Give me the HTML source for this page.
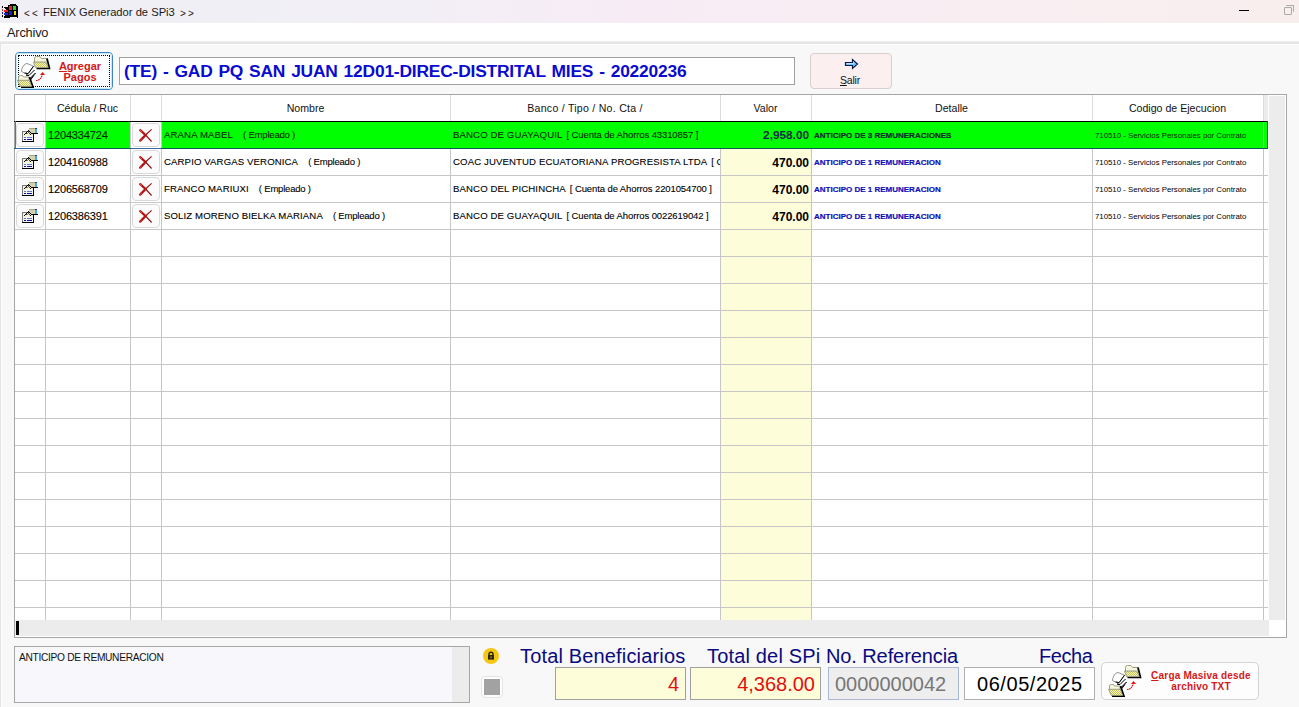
<!DOCTYPE html><html><head><meta charset="utf-8"><style>
*{margin:0;padding:0;box-sizing:border-box}
html,body{width:1299px;height:707px;overflow:hidden;background:#f8f8f8;font-family:"Liberation Sans",sans-serif;color:#000}
.a{position:absolute}
.t{position:absolute;white-space:nowrap;line-height:1}
.vl{position:absolute;width:1px;background:#c6c6c6}
.hl{position:absolute;height:1px;background:#c6c6c6}
.tx{-webkit-text-stroke:0.1px currentColor}
.btn{position:absolute;border:1px solid #d9d9d9;border-radius:4px;background:#fbfbfb}
</style></head><body>
<div class="a" style="left:0;top:0;width:1299px;height:23px;background:linear-gradient(90deg,#f0eff6 0%,#f2eff6 30%,#f7ecf5 48%,#f8edf3 62%,#f9eeee 100%)"></div>
<svg class="a" style="left:0px;top:0px" width="20" height="20" viewBox="0 0 20 20" shape-rendering="crispEdges">
<rect x="2" y="6" width="1" height="2" fill="#000"/><rect x="2" y="9" width="1" height="2" fill="#a04040"/><rect x="2" y="12" width="1" height="2" fill="#2020a0"/><rect x="2" y="15" width="1" height="2" fill="#000"/>
<rect x="4" y="7" width="5" height="1" fill="#000"/><rect x="4" y="10" width="5" height="2" fill="#e02020"/><rect x="4" y="13" width="5" height="2" fill="#2020d0"/><rect x="4" y="16" width="5" height="2" fill="#000"/>
<rect x="5" y="8" width="4" height="1" fill="#000"/><rect x="6" y="9" width="3" height="1" fill="#300"/><rect x="5" y="12" width="4" height="1" fill="#111"/><rect x="5" y="15" width="4" height="1" fill="#111"/>
<path d="M8 5H10V4H16V5H17V6H18V18H17V17H10V18H8Z" fill="#000"/>
<rect x="9" y="6" width="3" height="4" fill="#e02828"/><rect x="13" y="6" width="3" height="4" fill="#30d030"/>
<rect x="9" y="11" width="3" height="4" fill="#1818d8"/><rect x="14" y="11" width="2" height="4" fill="#f0e020"/>
</svg>
<div class="t" style="left:24px;top:9px;font-size:10px;color:#1a1a1a;letter-spacing:2.2px">&lt;&lt;</div><div class="t" style="left:43px;top:7px;font-size:11.2px;color:#1a1a1a">FENIX Generador de SPi3</div><div class="t" style="left:180px;top:9px;font-size:10px;color:#1a1a1a;letter-spacing:2.2px">&gt;&gt;</div>
<div class="a" style="left:1239px;top:10px;width:10px;height:1px;background:#000"></div>
<div class="a" style="left:1284px;top:7px;width:8px;height:8px;border:1px solid #aaa;border-radius:1px"></div>
<div class="a" style="left:1286px;top:5px;width:8px;height:7px;border-top:1px solid #aaa;border-right:1px solid #aaa;border-radius:1px"></div>
<div class="a" style="left:0;top:23px;width:1299px;height:18px;background:#fff"></div>
<div class="t" style="left:7px;top:27px;font-size:12.8px;letter-spacing:-0.2px;color:#1a1a1a">Archivo</div>
<div class="a" style="left:0;top:41px;width:1299px;height:3px;background:linear-gradient(#efefef,#e2e2e2)"></div>
<div class="a" style="left:0;top:44px;width:1299px;height:1px;background:#fff"></div>
<div class="a" style="left:0;top:44px;width:1px;height:663px;background:#e4e4e4"></div>
<div class="a" style="left:1px;top:44px;width:1px;height:663px;background:#fdfdfd"></div>
<div class="a" style="left:15px;top:52px;width:98px;height:38px;border:1px solid #3d84c4;border-radius:4px;background:#fbfdfe"></div>
<div class="a" style="left:16px;top:53px;width:96px;height:36px;border:1px solid #c5e9f7;border-radius:3px"></div>
<div class="a" style="left:18px;top:55px;width:92px;height:32px;border:1px dotted #000"></div>
<svg class="a" style="left:13px;top:53px" width="40" height="38" viewBox="0 0 40 38">
<defs><pattern id="dz13" width="2" height="2" patternUnits="userSpaceOnUse"><rect width="2" height="2" fill="#f4f4b8"/><rect width="1" height="1" fill="#c4c45a"/><rect x="1" y="1" width="1" height="1" fill="#c4c45a"/></pattern></defs>
<path d="M21.5 9V5.5Q21.5 3.5 23.5 3.5H27L28.5 5.5H34V9" fill="#f6f6dc" stroke="#a0a088" stroke-width="1"/>
<path d="M34 5.5L36.5 15.5H23.5" fill="none" stroke="#000" stroke-width="1.7"/>
<path d="M20.5 9H32.8L35.3 14.6H22.4Z" fill="url(#dz13)" stroke="#8a8a78" stroke-width="0.8"/>
<path d="M8.5 18.5C9 14 11 11 14 10.5L20.5 13.2L15.2 20.6L11.5 20Z" fill="#fff" stroke="#777" stroke-width="0.8"/>
<path d="M20.5 13.2L15.2 20.6L11.5 20" fill="none" stroke="#000" stroke-width="1"/>
<path d="M13 22L16 22.5L21.5 17M14.5 25L17 25.5L22.5 20M17 27.5L21 22.5" fill="none" stroke="#000" stroke-width="1"/>
<path d="M15.5 21L21.2 16.4L22.6 19.6L17 25.4Z" fill="#fff"/>
<path d="M13 22L16 22.5L21.5 17M14.5 25L17 25.5L22.5 20" fill="none" stroke="#000" stroke-width="1"/>
<path d="M5.5 27V24Q5.5 22.5 7.5 22.5H9.5L10.5 24H16V27" fill="#f6f6dc" stroke="#a0a088" stroke-width="1"/>
<path d="M16.5 24L20 34.2H8" fill="none" stroke="#000" stroke-width="1.7"/>
<path d="M4.5 27.3H16.2L18.6 33.4H7.3Z" fill="url(#dz13)" stroke="#8a8a78" stroke-width="0.8"/>
<path d="M23 27.5Q27.5 27.5 29.5 21.5" fill="none" stroke="#e01010" stroke-width="1.2" stroke-dasharray="1.6 0.6"/>
<path d="M27 22L29.5 19L32 22Z" fill="#e01010"/>
</svg>
<div class="t" style="left:57px;top:61px;width:46px;text-align:center;font-size:11px;font-weight:bold;color:#d41919;line-height:11px"><u>A</u>gregar<br>Pagos</div>
<div class="a" style="left:119px;top:57px;width:676px;height:28px;border:1px solid #a0a0a0;background:#fff"></div>
<div class="t" style="left:124px;top:63px;font-size:17.4px;font-weight:bold;word-spacing:1.3px;letter-spacing:-0.2px;color:#0a0ad0">(TE) - GAD PQ SAN JUAN 12D01-DIREC-DISTRITAL MIES - 20220236</div>
<div class="a" style="left:810px;top:53px;width:82px;height:36px;border:1px solid #d8d0d0;border-radius:4px;background:#fcefef"></div>
<svg class="a" style="left:843px;top:57px" width="16" height="14" viewBox="0 0 16 14">
<path d="M2.5 5.5H9.5V2.5L14.5 7L9.5 11.5V8.5H2.5Z" fill="#70c4f4" stroke="#0a1a50" stroke-width="1.2" stroke-linejoin="miter"/><path d="M3.5 6.5H10.5V4.5" fill="none" stroke="#c8ecff" stroke-width="0.8"/></svg>
<div class="t" style="left:840px;top:75px;font-size:10.5px;letter-spacing:-0.2px;color:#111"><u>S</u>alir</div>
<div class="a" style="left:14px;top:94px;width:1273px;height:544px;border:1px solid #a6a6a6;background:#fff"></div>
<div class="a" style="left:721px;top:148px;width:90px;height:472px;background:#fdfdd9"></div>
<div class="a" style="left:15px;top:95px;width:1248px;height:26px;background:#fff"></div>
<div class="a" style="left:1264px;top:95px;width:4px;height:26px;background:#ebebeb"></div>
<div class="a" style="left:1269px;top:96px;width:16px;height:524px;background:#ececec"></div>
<div class="a" style="left:15px;top:620px;width:1254px;height:16px;background:#ececec"></div>
<div class="a" style="left:16px;top:621px;width:3px;height:14px;background:#000"></div>
<div class="hl" style="left:15px;top:148px;width:1253px"></div>
<div class="hl" style="left:15px;top:175px;width:1253px"></div>
<div class="hl" style="left:15px;top:202px;width:1253px"></div>
<div class="hl" style="left:15px;top:229px;width:1253px"></div>
<div class="hl" style="left:15px;top:256px;width:1253px"></div>
<div class="hl" style="left:15px;top:283px;width:1253px"></div>
<div class="hl" style="left:15px;top:310px;width:1253px"></div>
<div class="hl" style="left:15px;top:337px;width:1253px"></div>
<div class="hl" style="left:15px;top:364px;width:1253px"></div>
<div class="hl" style="left:15px;top:391px;width:1253px"></div>
<div class="hl" style="left:15px;top:418px;width:1253px"></div>
<div class="hl" style="left:15px;top:445px;width:1253px"></div>
<div class="hl" style="left:15px;top:472px;width:1253px"></div>
<div class="hl" style="left:15px;top:499px;width:1253px"></div>
<div class="hl" style="left:15px;top:526px;width:1253px"></div>
<div class="hl" style="left:15px;top:553px;width:1253px"></div>
<div class="hl" style="left:15px;top:580px;width:1253px"></div>
<div class="hl" style="left:15px;top:607px;width:1253px"></div>
<div class="vl" style="left:45px;top:121px;height:499px"></div>
<div class="vl" style="left:45px;top:95px;height:26px;background:#dcdcdc"></div>
<div class="vl" style="left:130px;top:121px;height:499px"></div>
<div class="vl" style="left:130px;top:95px;height:26px;background:#dcdcdc"></div>
<div class="vl" style="left:161px;top:121px;height:499px"></div>
<div class="vl" style="left:161px;top:95px;height:26px;background:#dcdcdc"></div>
<div class="vl" style="left:450px;top:121px;height:499px"></div>
<div class="vl" style="left:450px;top:95px;height:26px;background:#dcdcdc"></div>
<div class="vl" style="left:720px;top:121px;height:499px"></div>
<div class="vl" style="left:720px;top:95px;height:26px;background:#dcdcdc"></div>
<div class="vl" style="left:811px;top:121px;height:499px"></div>
<div class="vl" style="left:811px;top:95px;height:26px;background:#dcdcdc"></div>
<div class="vl" style="left:1092px;top:121px;height:499px"></div>
<div class="vl" style="left:1092px;top:95px;height:26px;background:#dcdcdc"></div>
<div class="vl" style="left:1263px;top:121px;height:499px"></div>
<div class="vl" style="left:1263px;top:95px;height:26px;background:#dcdcdc"></div>
<div class="t" style="left:45px;top:103px;width:85px;text-align:center;font-size:10.6px;color:#111">Cédula / Ruc</div>
<div class="t" style="left:161px;top:103px;width:289px;text-align:center;font-size:10.6px;color:#111">Nombre</div>
<div class="t" style="left:450px;top:103px;width:270px;text-align:center;font-size:10.6px;letter-spacing:0.25px;color:#111">Banco / Tipo / No. Cta /</div>
<div class="t" style="left:720px;top:103px;width:91px;text-align:center;font-size:10.6px;color:#111">Valor</div>
<div class="t" style="left:811px;top:103px;width:281px;text-align:center;font-size:10.6px;color:#111">Detalle</div>
<div class="t" style="left:1092px;top:103px;width:171px;text-align:center;font-size:10.6px;color:#111">Codigo de Ejecucion</div>
<div class="a" style="left:46px;top:122px;width:84px;height:26px;background:#00ff00"></div>
<div class="a" style="left:162px;top:122px;width:1106px;height:26px;background:#00ff00"></div>
<div class="a" style="left:14px;top:121px;width:1254px;height:1px;background:#000"></div>
<div class="a" style="left:14px;top:148px;width:1254px;height:1px;background:#0d5a5a"></div>
<div class="a" style="left:15px;top:121px;width:1px;height:28px;background:#3d7ac0"></div>
<div class="a" style="left:15px;top:148px;width:30px;height:1px;background:#3a6aa8"></div>
<div class="a" style="left:131px;top:148px;width:30px;height:1px;background:#3a6aa8"></div>
<div class="a" style="left:1267px;top:121px;width:1px;height:28px;background:#0d5a5a"></div>
<div class="a" style="left:1263px;top:122px;width:1px;height:26px;background:#8cff8c"></div>
<div class="btn" style="left:16px;top:123px;width:28px;height:24px"></div>
<svg class="a" style="left:20px;top:125px" width="20" height="20" viewBox="0 0 20 20" shape-rendering="crispEdges">
<rect x="2" y="6" width="12" height="5" fill="#f6f4d0"/><rect x="2" y="11" width="12" height="6" fill="#f2f2fc"/>
<rect x="2" y="6" width="1" height="11" fill="#7a7a7a"/><rect x="2" y="6" width="12" height="1" fill="#7a7a7a"/>
<rect x="13" y="6" width="1" height="11" fill="#000"/><rect x="2" y="16" width="12" height="1" fill="#000"/>
<rect x="4" y="12" width="2" height="1" fill="#6878b0"/><rect x="7" y="12" width="5" height="1" fill="#6878b0"/>
<rect x="4" y="14" width="2" height="1" fill="#12128c"/><rect x="7" y="14" width="5" height="1" fill="#12128c"/>
<rect x="9" y="3" width="6" height="5" fill="#d6d2a6"/><rect x="9" y="3" width="6" height="1" fill="#a8a68a"/>
<rect x="11" y="8" width="7" height="1" fill="#000"/><rect x="15" y="3" width="2" height="5" fill="#48a8f0"/><rect x="15" y="3" width="2" height="1" fill="#1a4a9a"/>
<rect x="4" y="9" width="1" height="1" fill="#000"/><rect x="5" y="8" width="1" height="1" fill="#000"/><rect x="6" y="7" width="1" height="1" fill="#000"/>
<rect x="7" y="6" width="1" height="1" fill="#000"/><rect x="8" y="5" width="1" height="1" fill="#000"/><rect x="9" y="6" width="1" height="1" fill="#000"/>
<rect x="10" y="7" width="1" height="1" fill="#000"/><rect x="11" y="8" width="1" height="1" fill="#000"/><rect x="10" y="9" width="1" height="1" fill="#000"/>
<rect x="6" y="8" width="1" height="1" fill="#444"/><rect x="8" y="6" width="1" height="1" fill="#444"/><rect x="9" y="8" width="1" height="1" fill="#444"/><rect x="7" y="8" width="1" height="1" fill="#888"/><rect x="8" y="7" width="1" height="1" fill="#555"/>
</svg>
<div class="btn" style="left:132px;top:123px;width:28px;height:24px"></div>
<svg class="a" style="left:136px;top:127px" width="18" height="18" viewBox="0 0 18 18"><path d="M9.5 8L15.6 2.3M9.5 8L15.6 14.5" fill="none" stroke="#9a0c0c" stroke-width="1.1"/><path d="M4.2 3.2L9.5 8L4.2 13.6" fill="none" stroke="#b41414" stroke-width="2.3" stroke-linecap="round"/><path d="M4.2 3.2L6 4.8M4.2 13.6L5.5 12.3" stroke="#f07070" stroke-width="0.8"/></svg>
<div class="t" style="left:48px;top:130px;font-size:11px;letter-spacing:-0.15px;-webkit-text-stroke:0.12px #0a2a0a;color:#0a2a0a">1204334724</div>
<div class="t tx" style="left:164px;top:130px;font-size:9.6px;color:#0a2a0a"><span style="letter-spacing:0.12px">ARANA MABEL</span><span style="margin-left:10px;font-size:9.5px;letter-spacing:-0.2px">( Empleado )</span></div>
<div class="a" style="left:451px;top:122px;width:269px;height:26px;overflow:hidden"><div class="t tx" style="left:2px;top:8px;font-size:9.6px;color:#0a2a0a"><span style="letter-spacing:0.12px">BANCO DE GUAYAQUIL</span><span style="margin-left:4px;font-size:9.5px;letter-spacing:-0.1px">[ Cuenta de Ahorros 43310857 ]</span></div></div>
<div class="t" style="left:721px;top:130px;width:88px;text-align:right;font-size:11.8px;font-weight:bold;color:#102a48">2,958.00</div>
<div class="t" style="left:814px;top:132px;font-size:8px;font-weight:bold;-webkit-text-stroke:0.2px #0a2a30;color:#0a2a30">ANTICIPO DE 3 REMUNERACIONES</div>
<div class="t" style="left:1095px;top:132px;font-size:7.8px;color:#0a2a0a">710510 - Servicios Personales por Contrato</div>
<div class="btn" style="left:16px;top:150px;width:28px;height:24px"></div>
<svg class="a" style="left:20px;top:152px" width="20" height="20" viewBox="0 0 20 20" shape-rendering="crispEdges">
<rect x="2" y="6" width="12" height="5" fill="#f6f4d0"/><rect x="2" y="11" width="12" height="6" fill="#f2f2fc"/>
<rect x="2" y="6" width="1" height="11" fill="#7a7a7a"/><rect x="2" y="6" width="12" height="1" fill="#7a7a7a"/>
<rect x="13" y="6" width="1" height="11" fill="#000"/><rect x="2" y="16" width="12" height="1" fill="#000"/>
<rect x="4" y="12" width="2" height="1" fill="#6878b0"/><rect x="7" y="12" width="5" height="1" fill="#6878b0"/>
<rect x="4" y="14" width="2" height="1" fill="#12128c"/><rect x="7" y="14" width="5" height="1" fill="#12128c"/>
<rect x="9" y="3" width="6" height="5" fill="#d6d2a6"/><rect x="9" y="3" width="6" height="1" fill="#a8a68a"/>
<rect x="11" y="8" width="7" height="1" fill="#000"/><rect x="15" y="3" width="2" height="5" fill="#48a8f0"/><rect x="15" y="3" width="2" height="1" fill="#1a4a9a"/>
<rect x="4" y="9" width="1" height="1" fill="#000"/><rect x="5" y="8" width="1" height="1" fill="#000"/><rect x="6" y="7" width="1" height="1" fill="#000"/>
<rect x="7" y="6" width="1" height="1" fill="#000"/><rect x="8" y="5" width="1" height="1" fill="#000"/><rect x="9" y="6" width="1" height="1" fill="#000"/>
<rect x="10" y="7" width="1" height="1" fill="#000"/><rect x="11" y="8" width="1" height="1" fill="#000"/><rect x="10" y="9" width="1" height="1" fill="#000"/>
<rect x="6" y="8" width="1" height="1" fill="#444"/><rect x="8" y="6" width="1" height="1" fill="#444"/><rect x="9" y="8" width="1" height="1" fill="#444"/><rect x="7" y="8" width="1" height="1" fill="#888"/><rect x="8" y="7" width="1" height="1" fill="#555"/>
</svg>
<div class="btn" style="left:132px;top:150px;width:28px;height:24px"></div>
<svg class="a" style="left:136px;top:154px" width="18" height="18" viewBox="0 0 18 18"><path d="M9.5 8L15.6 2.3M9.5 8L15.6 14.5" fill="none" stroke="#9a0c0c" stroke-width="1.1"/><path d="M4.2 3.2L9.5 8L4.2 13.6" fill="none" stroke="#b41414" stroke-width="2.3" stroke-linecap="round"/><path d="M4.2 3.2L6 4.8M4.2 13.6L5.5 12.3" stroke="#f07070" stroke-width="0.8"/></svg>
<div class="t" style="left:48px;top:157px;font-size:11px;letter-spacing:-0.15px;-webkit-text-stroke:0.12px #000;color:#000">1204160988</div>
<div class="t tx" style="left:164px;top:157px;font-size:9.6px;color:#000"><span style="letter-spacing:0.12px">CARPIO VARGAS VERONICA</span><span style="margin-left:10px;font-size:9.5px;letter-spacing:-0.2px">( Empleado )</span></div>
<div class="a" style="left:451px;top:149px;width:269px;height:26px;overflow:hidden"><div class="t tx" style="left:2px;top:8px;font-size:9.6px;color:#000"><span style="letter-spacing:0.12px">COAC JUVENTUD ECUATORIANA PROGRESISTA LTDA</span><span style="margin-left:4px;font-size:9.5px;letter-spacing:-0.1px">[ Cuenta de Ahorros</span></div></div>
<div class="t" style="left:721px;top:157px;width:88px;text-align:right;font-size:12px;font-weight:bold;color:#000">470.00</div>
<div class="t" style="left:814px;top:159px;font-size:8px;font-weight:bold;-webkit-text-stroke:0.2px #1010b8;color:#1010b8">ANTICIPO DE 1 REMUNERACION</div>
<div class="t" style="left:1095px;top:159px;font-size:7.8px;color:#000">710510 - Servicios Personales por Contrato</div>
<div class="btn" style="left:16px;top:177px;width:28px;height:24px"></div>
<svg class="a" style="left:20px;top:179px" width="20" height="20" viewBox="0 0 20 20" shape-rendering="crispEdges">
<rect x="2" y="6" width="12" height="5" fill="#f6f4d0"/><rect x="2" y="11" width="12" height="6" fill="#f2f2fc"/>
<rect x="2" y="6" width="1" height="11" fill="#7a7a7a"/><rect x="2" y="6" width="12" height="1" fill="#7a7a7a"/>
<rect x="13" y="6" width="1" height="11" fill="#000"/><rect x="2" y="16" width="12" height="1" fill="#000"/>
<rect x="4" y="12" width="2" height="1" fill="#6878b0"/><rect x="7" y="12" width="5" height="1" fill="#6878b0"/>
<rect x="4" y="14" width="2" height="1" fill="#12128c"/><rect x="7" y="14" width="5" height="1" fill="#12128c"/>
<rect x="9" y="3" width="6" height="5" fill="#d6d2a6"/><rect x="9" y="3" width="6" height="1" fill="#a8a68a"/>
<rect x="11" y="8" width="7" height="1" fill="#000"/><rect x="15" y="3" width="2" height="5" fill="#48a8f0"/><rect x="15" y="3" width="2" height="1" fill="#1a4a9a"/>
<rect x="4" y="9" width="1" height="1" fill="#000"/><rect x="5" y="8" width="1" height="1" fill="#000"/><rect x="6" y="7" width="1" height="1" fill="#000"/>
<rect x="7" y="6" width="1" height="1" fill="#000"/><rect x="8" y="5" width="1" height="1" fill="#000"/><rect x="9" y="6" width="1" height="1" fill="#000"/>
<rect x="10" y="7" width="1" height="1" fill="#000"/><rect x="11" y="8" width="1" height="1" fill="#000"/><rect x="10" y="9" width="1" height="1" fill="#000"/>
<rect x="6" y="8" width="1" height="1" fill="#444"/><rect x="8" y="6" width="1" height="1" fill="#444"/><rect x="9" y="8" width="1" height="1" fill="#444"/><rect x="7" y="8" width="1" height="1" fill="#888"/><rect x="8" y="7" width="1" height="1" fill="#555"/>
</svg>
<div class="btn" style="left:132px;top:177px;width:28px;height:24px"></div>
<svg class="a" style="left:136px;top:181px" width="18" height="18" viewBox="0 0 18 18"><path d="M9.5 8L15.6 2.3M9.5 8L15.6 14.5" fill="none" stroke="#9a0c0c" stroke-width="1.1"/><path d="M4.2 3.2L9.5 8L4.2 13.6" fill="none" stroke="#b41414" stroke-width="2.3" stroke-linecap="round"/><path d="M4.2 3.2L6 4.8M4.2 13.6L5.5 12.3" stroke="#f07070" stroke-width="0.8"/></svg>
<div class="t" style="left:48px;top:184px;font-size:11px;letter-spacing:-0.15px;-webkit-text-stroke:0.12px #000;color:#000">1206568709</div>
<div class="t tx" style="left:164px;top:184px;font-size:9.6px;color:#000"><span style="letter-spacing:0.12px">FRANCO MARIUXI</span><span style="margin-left:10px;font-size:9.5px;letter-spacing:-0.2px">( Empleado )</span></div>
<div class="a" style="left:451px;top:176px;width:269px;height:26px;overflow:hidden"><div class="t tx" style="left:2px;top:8px;font-size:9.6px;color:#000"><span style="letter-spacing:0.12px">BANCO DEL PICHINCHA</span><span style="margin-left:4px;font-size:9.5px;letter-spacing:-0.1px">[ Cuenta de Ahorros 2201054700 ]</span></div></div>
<div class="t" style="left:721px;top:184px;width:88px;text-align:right;font-size:12px;font-weight:bold;color:#000">470.00</div>
<div class="t" style="left:814px;top:186px;font-size:8px;font-weight:bold;-webkit-text-stroke:0.2px #1010b8;color:#1010b8">ANTICIPO DE 1 REMUNERACION</div>
<div class="t" style="left:1095px;top:186px;font-size:7.8px;color:#000">710510 - Servicios Personales por Contrato</div>
<div class="btn" style="left:16px;top:204px;width:28px;height:24px"></div>
<svg class="a" style="left:20px;top:206px" width="20" height="20" viewBox="0 0 20 20" shape-rendering="crispEdges">
<rect x="2" y="6" width="12" height="5" fill="#f6f4d0"/><rect x="2" y="11" width="12" height="6" fill="#f2f2fc"/>
<rect x="2" y="6" width="1" height="11" fill="#7a7a7a"/><rect x="2" y="6" width="12" height="1" fill="#7a7a7a"/>
<rect x="13" y="6" width="1" height="11" fill="#000"/><rect x="2" y="16" width="12" height="1" fill="#000"/>
<rect x="4" y="12" width="2" height="1" fill="#6878b0"/><rect x="7" y="12" width="5" height="1" fill="#6878b0"/>
<rect x="4" y="14" width="2" height="1" fill="#12128c"/><rect x="7" y="14" width="5" height="1" fill="#12128c"/>
<rect x="9" y="3" width="6" height="5" fill="#d6d2a6"/><rect x="9" y="3" width="6" height="1" fill="#a8a68a"/>
<rect x="11" y="8" width="7" height="1" fill="#000"/><rect x="15" y="3" width="2" height="5" fill="#48a8f0"/><rect x="15" y="3" width="2" height="1" fill="#1a4a9a"/>
<rect x="4" y="9" width="1" height="1" fill="#000"/><rect x="5" y="8" width="1" height="1" fill="#000"/><rect x="6" y="7" width="1" height="1" fill="#000"/>
<rect x="7" y="6" width="1" height="1" fill="#000"/><rect x="8" y="5" width="1" height="1" fill="#000"/><rect x="9" y="6" width="1" height="1" fill="#000"/>
<rect x="10" y="7" width="1" height="1" fill="#000"/><rect x="11" y="8" width="1" height="1" fill="#000"/><rect x="10" y="9" width="1" height="1" fill="#000"/>
<rect x="6" y="8" width="1" height="1" fill="#444"/><rect x="8" y="6" width="1" height="1" fill="#444"/><rect x="9" y="8" width="1" height="1" fill="#444"/><rect x="7" y="8" width="1" height="1" fill="#888"/><rect x="8" y="7" width="1" height="1" fill="#555"/>
</svg>
<div class="btn" style="left:132px;top:204px;width:28px;height:24px"></div>
<svg class="a" style="left:136px;top:208px" width="18" height="18" viewBox="0 0 18 18"><path d="M9.5 8L15.6 2.3M9.5 8L15.6 14.5" fill="none" stroke="#9a0c0c" stroke-width="1.1"/><path d="M4.2 3.2L9.5 8L4.2 13.6" fill="none" stroke="#b41414" stroke-width="2.3" stroke-linecap="round"/><path d="M4.2 3.2L6 4.8M4.2 13.6L5.5 12.3" stroke="#f07070" stroke-width="0.8"/></svg>
<div class="t" style="left:48px;top:211px;font-size:11px;letter-spacing:-0.15px;-webkit-text-stroke:0.12px #000;color:#000">1206386391</div>
<div class="t tx" style="left:164px;top:211px;font-size:9.6px;color:#000"><span style="letter-spacing:0.12px">SOLIZ MORENO BIELKA MARIANA</span><span style="margin-left:10px;font-size:9.5px;letter-spacing:-0.2px">( Empleado )</span></div>
<div class="a" style="left:451px;top:203px;width:269px;height:26px;overflow:hidden"><div class="t tx" style="left:2px;top:8px;font-size:9.6px;color:#000"><span style="letter-spacing:0.12px">BANCO DE GUAYAQUIL</span><span style="margin-left:4px;font-size:9.5px;letter-spacing:-0.1px">[ Cuenta de Ahorros 0022619042 ]</span></div></div>
<div class="t" style="left:721px;top:211px;width:88px;text-align:right;font-size:12px;font-weight:bold;color:#000">470.00</div>
<div class="t" style="left:814px;top:213px;font-size:8px;font-weight:bold;-webkit-text-stroke:0.2px #1010b8;color:#1010b8">ANTICIPO DE 1 REMUNERACION</div>
<div class="t" style="left:1095px;top:213px;font-size:7.8px;color:#000">710510 - Servicios Personales por Contrato</div>
<div class="a" style="left:14px;top:646px;width:456px;height:57px;border:1px solid #a6a6a6;background:#f7f7fc"></div>
<div class="a" style="left:452px;top:647px;width:17px;height:55px;background:#ececec"></div>
<div class="t" style="left:19px;top:653px;font-size:10.2px;letter-spacing:-0.3px;color:#111">ANTICIPO DE REMUNERACION</div>
<div class="a" style="left:483px;top:648px;width:16px;height:16px;border-radius:50%;background:#f5c614"></div>
<svg class="a" style="left:483px;top:648px" width="16" height="16" viewBox="0 0 16 16"><path d="M6 7.5V6.2a2 2 0 0 1 4 0V7.5" fill="none" stroke="#2a2410" stroke-width="1.4"/><rect x="5" y="7" width="6" height="4.6" fill="#2a2410"/><rect x="7.5" y="8.3" width="1" height="2" fill="#c8a820"/></svg>
<div class="a" style="left:481px;top:676px;width:22px;height:22px;border:1px solid #e4e4e4;border-radius:4px;background:#fdfdfd"></div>
<div class="a" style="left:484px;top:679px;width:16px;height:16px;background:#a2a2a2"></div>
<div class="t" style="left:520px;top:646px;font-size:20px;color:#0a0a7e;letter-spacing:0.16px">Total Beneficiarios</div>
<div class="t" style="left:707px;top:646px;font-size:20px;color:#0a0a7e;letter-spacing:0.17px">Total del SPi</div>
<div class="t" style="left:826px;top:646px;font-size:20px;color:#0a0a7e;letter-spacing:-0.1px">No. Referencia</div>
<div class="t" style="left:1039px;top:646px;font-size:20px;color:#0a0a7e;letter-spacing:-0.45px">Fecha</div>
<div class="a" style="left:555px;top:667px;width:131px;height:33px;border:1px solid #a0a0a0;background:#fdfdd9"></div>
<div class="t" style="left:555px;top:674px;width:124px;text-align:right;font-size:20px;color:#e01010">4</div>
<div class="a" style="left:690px;top:667px;width:131px;height:33px;border:1px solid #a0a0a0;background:#fdfdd9"></div>
<div class="t" style="left:690px;top:674px;width:125px;text-align:right;font-size:20px;color:#e01010">4,368.00</div>
<div class="a" style="left:828px;top:667px;width:131px;height:33px;border:1px solid #a8b8d0;background:#eeeeee"></div>
<div class="t" style="left:835px;top:674px;font-size:20px;color:#777">0000000042</div>
<div class="a" style="left:964px;top:667px;width:131px;height:33px;border:1px solid #b0b0b0;background:#fff"></div>
<div class="t" style="left:977px;top:674px;font-size:20px;color:#000;letter-spacing:0.55px">06/05/2025</div>
<div class="a" style="left:1101px;top:662px;width:158px;height:38px;border:1px solid #d4d4d4;border-radius:5px;background:#fdfdfd"></div>
<svg class="a" style="left:1104px;top:662px" width="40" height="38" viewBox="0 0 40 38">
<defs><pattern id="dz1104" width="2" height="2" patternUnits="userSpaceOnUse"><rect width="2" height="2" fill="#f4f4b8"/><rect width="1" height="1" fill="#c4c45a"/><rect x="1" y="1" width="1" height="1" fill="#c4c45a"/></pattern></defs>
<path d="M21.5 9V5.5Q21.5 3.5 23.5 3.5H27L28.5 5.5H34V9" fill="#f6f6dc" stroke="#a0a088" stroke-width="1"/>
<path d="M34 5.5L36.5 15.5H23.5" fill="none" stroke="#000" stroke-width="1.7"/>
<path d="M20.5 9H32.8L35.3 14.6H22.4Z" fill="url(#dz1104)" stroke="#8a8a78" stroke-width="0.8"/>
<path d="M8.5 18.5C9 14 11 11 14 10.5L20.5 13.2L15.2 20.6L11.5 20Z" fill="#fff" stroke="#777" stroke-width="0.8"/>
<path d="M20.5 13.2L15.2 20.6L11.5 20" fill="none" stroke="#000" stroke-width="1"/>
<path d="M13 22L16 22.5L21.5 17M14.5 25L17 25.5L22.5 20M17 27.5L21 22.5" fill="none" stroke="#000" stroke-width="1"/>
<path d="M15.5 21L21.2 16.4L22.6 19.6L17 25.4Z" fill="#fff"/>
<path d="M13 22L16 22.5L21.5 17M14.5 25L17 25.5L22.5 20" fill="none" stroke="#000" stroke-width="1"/>
<path d="M5.5 27V24Q5.5 22.5 7.5 22.5H9.5L10.5 24H16V27" fill="#f6f6dc" stroke="#a0a088" stroke-width="1"/>
<path d="M16.5 24L20 34.2H8" fill="none" stroke="#000" stroke-width="1.7"/>
<path d="M4.5 27.3H16.2L18.6 33.4H7.3Z" fill="url(#dz1104)" stroke="#8a8a78" stroke-width="0.8"/>
<path d="M23 27.5Q27.5 27.5 29.5 21.5" fill="none" stroke="#e01010" stroke-width="1.2" stroke-dasharray="1.6 0.6"/>
<path d="M27 22L29.5 19L32 22Z" fill="#e01010"/>
</svg>
<div class="t" style="left:1148px;top:671px;width:106px;text-align:center;font-size:10px;letter-spacing:0.2px;font-weight:bold;color:#d41919;line-height:10.5px"><u>C</u>arga Masiva desde<br>archivo TXT</div>
</body></html>
